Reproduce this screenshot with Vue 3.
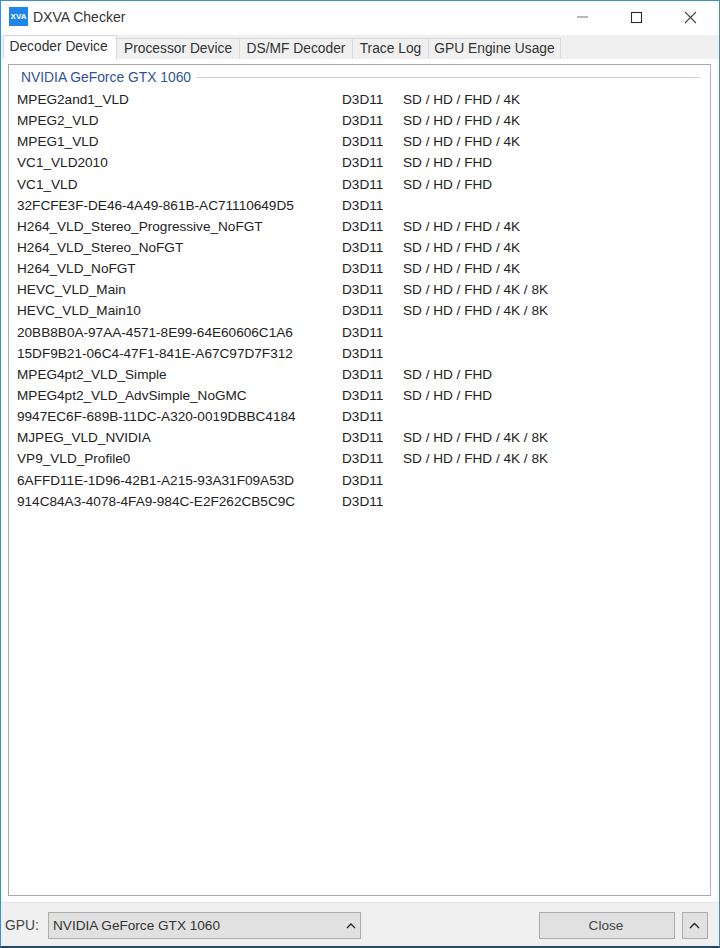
<template>
  <div class="window">
    <header class="titlebar">
      <div class="app-icon">XVA</div>
      <span class="app-title">DXVA Checker</span>
      <div class="win-controls">
        <svg class="win-btn" width="54" height="30" viewBox="0 0 54 30">
          <path d="M22 15h11" stroke="#8c8c8c" stroke-width="1.2" />
        </svg>
        <svg class="win-btn" width="54" height="30" viewBox="0 0 54 30">
          <rect x="22.5" y="10.5" width="10" height="10" fill="none" stroke="#2a2a2a" stroke-width="1.1" />
        </svg>
        <svg class="win-btn" width="54" height="30" viewBox="0 0 54 30">
          <path d="M22 10l11 11M33 10L22 21" stroke="#444" stroke-width="1.1" fill="none" />
        </svg>
      </div>
    </header>

    <div class="body">
      <nav class="tabs">
        <div
          v-for="(tab, i) in tabs"
          :key="tab.label"
          class="tab"
          :class="{ 'tab--active': i === 0 }"
          :style="{ width: tab.width + 'px' }"
        >
          {{ tab.label }}
        </div>
      </nav>

      <section class="panel">
        <div class="group-title">
          <span class="group-title__text">NVIDIA GeForce GTX 1060</span>
          <span class="group-title__line"></span>
        </div>
        <div class="rows">
          <div v-for="row in rows" :key="row[0]" class="row">
            <span class="row__name">{{ row[0] }}</span>
            <span class="row__api">D3D11</span>
            <span class="row__res">{{ row[1] }}</span>
          </div>
        </div>
      </section>

      <footer class="footer">
        <span class="gpu-label">GPU:</span>
        <div class="gpu-select">
          <span>NVIDIA GeForce GTX 1060</span>
          <svg width="10" height="6" viewBox="0 0 10 6">
            <path d="M1 5l4-4 4 4" fill="none" stroke="#222" stroke-width="1.3" />
          </svg>
        </div>
        <button class="btn btn--close">Close</button>
        <button class="btn btn--up">
          <svg width="11" height="7" viewBox="0 0 11 7">
            <path d="M1 6l4.5-4.5L10 6" fill="none" stroke="#222" stroke-width="1.4" />
          </svg>
        </button>
      </footer>
    </div>
  </div>
</template>

<script setup>
const tabs = [
  { label: 'Decoder Device', width: 114 },
  { label: 'Processor Device', width: 123 },
  { label: 'DS/MF Decoder', width: 113 },
  { label: 'Trace Log', width: 76 },
  { label: 'GPU Engine Usage', width: 132 }
]

const sdFhd = 'SD / HD / FHD'
const sd4k = 'SD / HD / FHD / 4K'
const sd8k = 'SD / HD / FHD / 4K / 8K'

const rows = [
  ['MPEG2and1_VLD', sd4k],
  ['MPEG2_VLD', sd4k],
  ['MPEG1_VLD', sd4k],
  ['VC1_VLD2010', sdFhd],
  ['VC1_VLD', sdFhd],
  ['32FCFE3F-DE46-4A49-861B-AC71110649D5', ''],
  ['H264_VLD_Stereo_Progressive_NoFGT', sd4k],
  ['H264_VLD_Stereo_NoFGT', sd4k],
  ['H264_VLD_NoFGT', sd4k],
  ['HEVC_VLD_Main', sd8k],
  ['HEVC_VLD_Main10', sd8k],
  ['20BB8B0A-97AA-4571-8E99-64E60606C1A6', ''],
  ['15DF9B21-06C4-47F1-841E-A67C97D7F312', ''],
  ['MPEG4pt2_VLD_Simple', sdFhd],
  ['MPEG4pt2_VLD_AdvSimple_NoGMC', sdFhd],
  ['9947EC6F-689B-11DC-A320-0019DBBC4184', ''],
  ['MJPEG_VLD_NVIDIA', sd8k],
  ['VP9_VLD_Profile0', sd8k],
  ['6AFFD11E-1D96-42B1-A215-93A31F09A53D', ''],
  ['914C84A3-4078-4FA9-984C-E2F262CB5C9C', '']
]
</script>

<style>
html,
body {
  margin: 0;
  background: #fff;
}
</style>

<style scoped>
.window {
  box-sizing: border-box;
  width: 720px;
  height: 948px;
  display: flex;
  flex-direction: column;
  border: 1px solid #3f8fc4;
  border-bottom: 2px solid #1f4a63;
  background: #fff;
  font-family: 'Liberation Sans', Arial, sans-serif;
  font-size: 13.6px;
  color: #222;
  overflow: hidden;
}

/* title bar */
.titlebar {
  flex: none;
  box-sizing: border-box;
  height: 34px;
  display: flex;
  align-items: center;
  padding: 0 2px 3px 8px;
  background: #fff;
}

.app-icon {
  width: 19px;
  height: 19px;
  background: #1e86e8;
  color: #fff;
  font-size: 8px;
  font-weight: 700;
  line-height: 19px;
  text-align: center;
}

.app-title {
  margin-left: 5px;
  font-size: 14px;
  color: #333;
}

.win-controls {
  margin-left: auto;
  display: flex;
}

.win-btn {
  display: block;
}

/* tabs */
.body {
  flex: 1;
  min-height: 0;
  display: flex;
  flex-direction: column;
  background: #fff;
}

.tabs {
  flex: none;
  height: 24px;
  display: flex;
  align-items: flex-end;
  padding-left: 2px;
  background: #f0f0f0;
  position: relative;
  z-index: 1;
}

.tab {
  box-sizing: border-box;
  height: 21px;
  border: 1px solid #d9d9d9;
  border-left: none;
  border-bottom: none;
  background: #f0f0f0;
  color: #333;
  font-size: 13.8px;
  line-height: 20px;
  text-align: center;
  white-space: nowrap;
}

.tab--active {
  height: 24px;
  padding-right: 3px;
  border-left: 1px solid #d9d9d9;
  background: #fff;
  line-height: 22px;
}

/* panel */
.panel {
  flex: none;
  box-sizing: border-box;
  height: 832px;
  margin: 5px 8px 0 7px;
  border: 1px solid #a9a9a9;
  border-right-color: #b4b4b4;
  background: #fff;
  padding: 4px 10px 0 8px;
}

.group-title {
  display: flex;
  align-items: center;
  height: 16px;
  padding-left: 4px;
  gap: 5px;
  color: #2f5496;
}

.group-title__text {
  font-size: 13.85px;
  white-space: nowrap;
}

.group-title__line {
  flex: 1;
  height: 1px;
  background: #c5d0da;
}

.rows {
  margin-top: 4px;
}

.row {
  height: 21.15px;
  display: flex;
  align-items: center;
  white-space: nowrap;
  color: #222;
}

.row__name {
  width: 325px;
}

.row__api {
  width: 61px;
}

/* footer */
.footer {
  flex: 1;
  display: flex;
  align-items: center;
  margin-top: 6px;
  padding: 2px 11px 0 4px;
  border-top: 1px solid #e3e3e3;
  background: #f0f0f0;
}

.gpu-label {
  width: 43px;
  color: #444;
  font-size: 13.8px;
}

.gpu-select {
  box-sizing: border-box;
  width: 313px;
  height: 27px;
  display: flex;
  align-items: center;
  justify-content: space-between;
  padding: 0 4px 0 4px;
  border: 1px solid #adadad;
  background: #e1e1e1;
  color: #333;
}

.btn {
  box-sizing: border-box;
  height: 27px;
  border: 1px solid #adadad;
  background: #e1e1e1;
  color: #444;
  font-family: inherit;
  font-size: 13.6px;
  padding: 0 2px 0 0;
}

.btn--close {
  width: 136px;
  margin-left: 178px;
}

.btn--up {
  width: 26px;
  margin-left: 7px;
  display: flex;
  align-items: center;
  justify-content: center;
}
</style>
